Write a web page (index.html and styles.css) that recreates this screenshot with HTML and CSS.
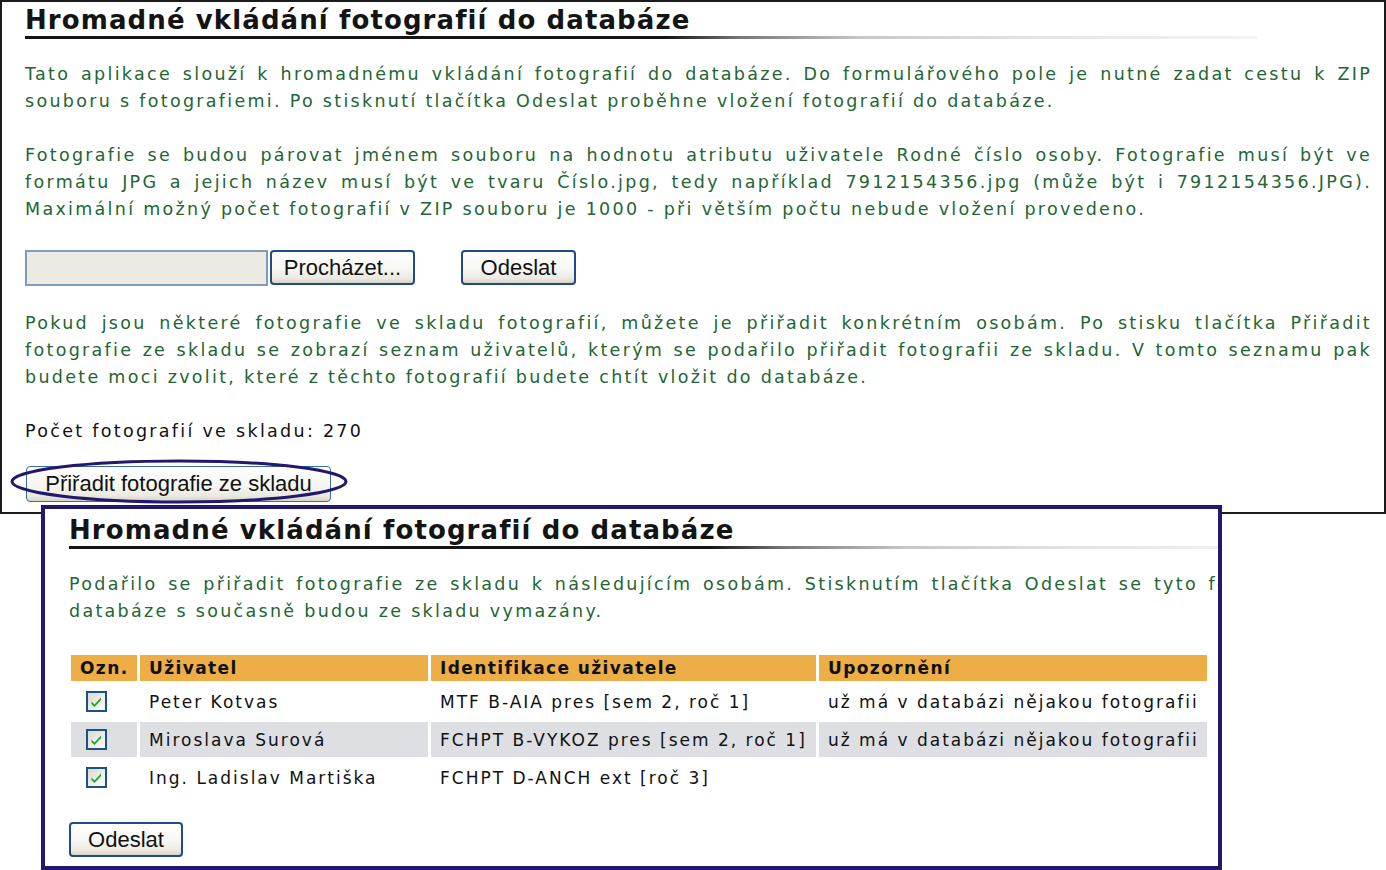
FILE: index.html
```html
<!DOCTYPE html>
<html lang="cs">
<head>
<meta charset="utf-8">
<title>Hromadné vkládání fotografií do databáze</title>
<link rel="stylesheet" href="styles.css">
</head>
<body>
<div class="desk">
  <section class="win win-main">
    <h1 class="title">Hromadné vkládání fotografií do databáze</h1>
    <p class="info">
      <span class="ln">Tato aplikace slouží k hromadnému vkládání fotografií do databáze. Do formulářového pole je nutné zadat cestu k ZIP</span>
      <span class="ln last">souboru s fotografiemi. Po stisknutí tlačítka Odeslat proběhne vložení fotografií do databáze.</span>
    </p>
    <p class="info">
      <span class="ln">Fotografie se budou párovat jménem souboru na hodnotu atributu uživatele Rodné číslo osoby. Fotografie musí být ve</span>
      <span class="ln">formátu JPG a jejich název musí být ve tvaru Číslo.jpg, tedy například 7912154356.jpg (může být i 7912154356.JPG).</span>
      <span class="ln last">Maximální možný počet fotografií v ZIP souboru je 1000 - při větším počtu nebude vložení provedeno.</span>
    </p>
    <div class="upload">
      <input class="file-field" type="text" aria-label="Soubor">
      <button class="btn btn-browse" type="button">Procházet...</button>
      <button class="btn btn-send" type="button">Odeslat</button>
    </div>
    <p class="info">
      <span class="ln">Pokud jsou některé fotografie ve skladu fotografií, můžete je přiřadit konkrétním osobám. Po stisku tlačítka Přiřadit</span>
      <span class="ln">fotografie ze skladu se zobrazí seznam uživatelů, kterým se podařilo přiřadit fotografii ze skladu. V tomto seznamu pak</span>
      <span class="ln last">budete moci zvolit, které z těchto fotografií budete chtít vložit do databáze.</span>
    </p>
    <p class="count">Počet fotografií ve skladu: 270</p>
    <button class="btn btn-assign" type="button">Přiřadit fotografie ze skladu</button>
  </section>

  <svg class="mark" width="339" height="45" viewBox="0 0 339 45" aria-hidden="true">
    <ellipse cx="169" cy="22.5" rx="167" ry="20.5" fill="none" stroke="#23186b" stroke-width="3"/>
  </svg>

  <section class="win win-result">
    <div class="inner">
      <h1 class="title">Hromadné vkládání fotografií do databáze</h1>
      <p class="info">
        <span class="ln">Podařilo se přiřadit fotografie ze skladu k následujícím osobám. Stisknutím tlačítka Odeslat se tyto fotografie vloží do</span>
        <span class="ln last">databáze s současně budou ze skladu vymazány.</span>
      </p>
      <table class="users">
        <colgroup>
          <col class="c1"><col class="c2"><col class="c3"><col class="c4">
        </colgroup>
        <thead>
          <tr><th>Ozn.</th><th>Uživatel</th><th>Identifikace uživatele</th><th>Upozornění</th></tr>
        </thead>
        <tbody>
          <tr>
            <td class="chk"><span class="cb"><svg width="21" height="21" viewBox="0 0 21 21"><defs><linearGradient id="g1" x1="0" y1="0" x2="1" y2="1"><stop offset="0" stop-color="#d8d8d0"/><stop offset="1" stop-color="#ffffff"/></linearGradient></defs><rect x="1" y="1" width="19" height="19" fill="url(#g1)" stroke="#1c5180" stroke-width="2"/><path d="M5.5 10.5 L8.5 13.5 L15 6.5 L15 9 L8.5 16 L5.5 13 Z" fill="#21a12a"/></svg></span></td>
            <td>Peter Kotvas</td>
            <td>MTF B-AIA pres [sem 2, roč 1]</td>
            <td>už má v databázi nějakou fotografii</td>
          </tr>
          <tr class="alt">
            <td class="chk"><span class="cb"><svg width="21" height="21" viewBox="0 0 21 21"><rect x="1" y="1" width="19" height="19" fill="url(#g1)" stroke="#1c5180" stroke-width="2"/><path d="M5.5 10.5 L8.5 13.5 L15 6.5 L15 9 L8.5 16 L5.5 13 Z" fill="#21a12a"/></svg></span></td>
            <td>Miroslava Surová</td>
            <td>FCHPT B-VYKOZ pres [sem 2, roč 1]</td>
            <td>už má v databázi nějakou fotografii</td>
          </tr>
          <tr>
            <td class="chk"><span class="cb"><svg width="21" height="21" viewBox="0 0 21 21"><rect x="1" y="1" width="19" height="19" fill="url(#g1)" stroke="#1c5180" stroke-width="2"/><path d="M5.5 10.5 L8.5 13.5 L15 6.5 L15 9 L8.5 16 L5.5 13 Z" fill="#21a12a"/></svg></span></td>
            <td>Ing. Ladislav Martiška</td>
            <td>FCHPT D-ANCH ext [roč 3]</td>
            <td></td>
          </tr>
        </tbody>
      </table>
      <button class="btn btn-submit" type="button">Odeslat</button>
    </div>
  </section>
</div>
</body>
</html>
```
FILE: styles.css
```css
html, body {
  margin: 0;
  padding: 0;
  background: #ffffff;
}

.desk {
  position: relative;
  width: 1386px;
  height: 870px;
  overflow: hidden;
  font-family: "DejaVu Sans", Verdana, sans-serif;
  color: #111111;
}

.win {
  position: absolute;
  box-sizing: border-box;
  background: #ffffff;
}

.win-main {
  left: 0;
  top: 0;
  width: 1386px;
  height: 514px;
  border: 2px solid #1a1a1a;
  padding: 2px 12px 0 23px;
}

.win-result {
  left: 41px;
  top: 505px;
  width: 1181px;
  height: 365px;
  border: 4px solid #23186b;
  padding: 5px 0 0 24px;
  overflow: hidden;
}

.win-result .inner {
  width: 1347px;
}

.title {
  margin: 0 0 22px;
  width: 1232px;
  padding-bottom: 3px;
  font-size: 26px;
  line-height: 32px;
  font-weight: 700;
  letter-spacing: 1.1px;
  color: #141414;
  background: linear-gradient(to right, #141414 0%, #141414 52%, #77777a 58%, #c8c8cc 68%, #e4e4e8 82%, #f4f4f6 100%) left bottom / 100% 3px no-repeat;
}

.info {
  margin: 0 0 27px;
  font-size: 17.5px;
  line-height: 27px;
  letter-spacing: 2.3px;
  color: #226633;
  text-align: justify;
}

.ln {
  display: block;
  text-align: justify;
  text-align-last: justify;
}

.ln.last {
  text-align-last: left;
}

.upload {
  display: flex;
  align-items: flex-start;
  height: 36px;
  margin-bottom: 24px;
}

.file-field {
  box-sizing: border-box;
  width: 243px;
  height: 36px;
  margin: 0;
  border: 2px solid #7f9db9;
  background: #ebebe4;
  padding: 0 4px;
}

.btn {
  box-sizing: border-box;
  margin: 0;
  padding: 0;
  border: 2px solid #1f4c87;
  border-radius: 4px;
  background: linear-gradient(#ffffff 0%, #f6f6f2 55%, #ebe9e1 85%, #d8d3c6 100%);
  font-family: "Liberation Sans", Arial, sans-serif;
  font-size: 22px;
  color: #111111;
  text-align: center;
}

.btn-browse {
  width: 145px;
  height: 35px;
  margin-left: 2px;
}

.btn-send {
  width: 115px;
  height: 35px;
  margin-left: 46px;
}

.count {
  margin: 0 0 21px;
  font-size: 17.5px;
  line-height: 27px;
  letter-spacing: 2.3px;
  color: #111111;
}

.btn-assign {
  display: block;
  width: 305px;
  height: 36px;
  margin-left: 1px;
  border-width: 1px;
  border-color: #3a6ea5;
}

.mark {
  position: absolute;
  left: 10px;
  top: 459px;
}

.users {
  border-collapse: separate;
  border-spacing: 3px;
  table-layout: fixed;
  width: 1142px;
  margin: 26px 0 0 -1px;
}

.users .c1 { width: 66px; }
.users .c2 { width: 288px; }
.users .c3 { width: 385px; }
.users .c4 { width: 388px; }

.users th {
  height: 26px;
  padding: 0 9px;
  background: #edae48;
  text-align: left;
  font-size: 17px;
  font-weight: 700;
  letter-spacing: 1.4px;
  color: #111111;
  white-space: nowrap;
}

.users td {
  height: 35px;
  padding: 0 9px;
  font-size: 17px;
  letter-spacing: 2px;
  color: #111111;
  white-space: nowrap;
  overflow: hidden;
}

.users tr.alt td {
  background: #dedfe3;
}

.users td.chk {
  padding: 0 0 0 15px;
}

.cb {
  display: block;
  width: 21px;
  height: 21px;
}

.cb svg {
  display: block;
}

.btn-submit {
  display: block;
  width: 114px;
  height: 35px;
  margin-top: 24px;
}
```
